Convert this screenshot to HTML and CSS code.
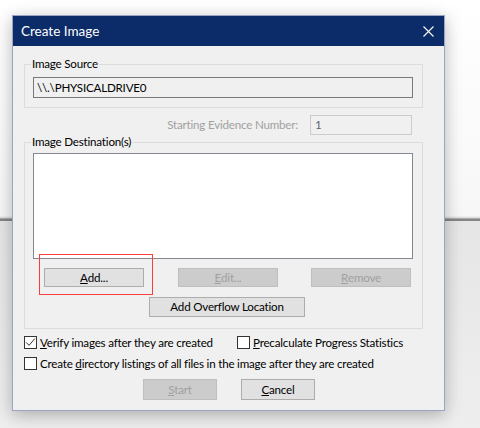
FILE: index.html
```html
<!DOCTYPE html>
<html>
<head>
<meta charset="utf-8">
<title>Create Image</title>
<link rel="stylesheet" href="styles.css">
</head>
<body>
<div class="dialog">
  <div class="titlebar">
    <span class="title">Create Image</span>
    <svg class="close" width="11" height="11" viewBox="0 0 11 11"><path d="M0.5 0.5 L10.5 10.5 M10.5 0.5 L0.5 10.5" stroke="#ffffff" stroke-width="1.1" fill="none"/></svg>
  </div>
  <div class="content">
    <div class="group g-source">
      <span class="legend">Image Source</span>
      <div class="field src">\\.\PHYSICALDRIVE0</div>
    </div>
    <div class="evrow">
      <span class="evlabel">Starting Evidence Number:</span>
      <div class="field ev">1</div>
    </div>
    <div class="group g-dest">
      <span class="legend">Image Destination(s)</span>
      <div class="listbox"></div>
      <div class="btnrow">
        <div class="btn b-add"><u>A</u>dd...</div>
        <div class="btn disabled b-edit"><u>E</u>dit...</div>
        <div class="btn disabled b-remove"><u>R</u>emove</div>
      </div>
      <div class="btn b-overflow">Add Overflow Location</div>
    </div>
    <div class="checks">
      <div class="chk c-verify">
        <span class="box"><svg width="11" height="11" viewBox="0 0 11 11"><path d="M1.2 5.4 L4 8.4 L9.8 1.6" stroke="#333333" stroke-width="1" fill="none"/></svg></span>
        <span class="ctext"><u>V</u>erify images after they are created</span>
      </div>
      <div class="chk">
        <span class="box"></span>
        <span class="ctext"><u>P</u>recalculate Progress Statistics</span>
      </div>
    </div>
    <div class="checks row2">
      <div class="chk">
        <span class="box"></span>
        <span class="ctext">Create <u>d</u>irectory listings of all files in the image after they are created</span>
      </div>
    </div>
    <div class="actions">
      <div class="btn disabled b-act"><u>S</u>tart</div>
      <div class="btn b-act"><u>C</u>ancel</div>
    </div>
  </div>
</div>
<div class="highlight"></div>
</body>
</html>
```
FILE: styles.css
```css
* { box-sizing: border-box; }
html, body { margin: 0; padding: 0; }
body {
  width: 480px;
  height: 428px;
  overflow: hidden;
  position: relative;
  font-family: Lato, "Noto Sans", sans-serif;
  font-size: 11.6px;
  letter-spacing: -0.2px;
  color: #000;
  background: linear-gradient(to bottom, #ffffff 0, #f7f7f7 216px, #d4d4d4 218px, #868686 219px, #868686 221px, #e6e6e6 221px, #eeeeee 100%);
}
.dialog {
  position: absolute;
  left: 12px;
  top: 15px;
  width: 433px;
  height: 396px;
  border: 1px solid #9ba5c3;
  background: #f0f0f0;
  box-shadow: 0 4px 16px rgba(0, 0, 0, 0.28);
  display: flex;
  flex-direction: column;
}
.titlebar {
  flex: none;
  height: 30px;
  background: #0c2c69;
  color: #ffffff;
  display: flex;
  align-items: center;
  justify-content: space-between;
  padding: 0 10px 0 8px;
}
.title { font-size: 13.5px; line-height: 16px; letter-spacing: 0; }
.close { display: block; }
.content {
  padding: 18px 0 0 11px;
  display: flex;
  flex-direction: column;
  align-items: flex-start;
}
.group {
  position: relative;
  width: 399px;
  border: 1px solid #dcdcdc;
}
.legend {
  position: absolute;
  top: -9px;
  left: 6px;
  padding: 0 1px;
  line-height: 16px;
  background: #f0f0f0;
}
.g-source { padding: 12px 8px 9px 8px; }
.field {
  border: 1px solid #7a7a7a;
  background: #f0f0f0;
  display: flex;
  align-items: center;
  line-height: 16px;
}
.src { width: 380px; height: 21px; padding-left: 3px; }
.evrow {
  width: 399px;
  margin-top: 7px;
  display: flex;
  justify-content: flex-end;
  align-items: center;
  gap: 12px;
  padding-right: 11px;
}
.evlabel { color: #a0a0a0; line-height: 16px; }
.ev {
  width: 102px;
  height: 20px;
  border-color: #cccccc;
  padding-left: 4px;
  color: #5a6478;
}
.g-dest { margin-top: 7px; padding: 10px 0 11px 8px; }
.listbox {
  width: 380px;
  height: 106px;
  background: #ffffff;
  border: 1px solid #828790;
}
.btnrow { display: flex; margin-top: 9px; }
.btn {
  display: flex;
  align-items: center;
  justify-content: center;
  background: #e1e1e1;
  border: 1px solid #adadad;
  line-height: 16px;
}
.btn.disabled {
  background: #cccccc;
  border-color: #bfbfbf;
  color: #a0a0a0;
}
.btnrow .btn { width: 100px; height: 19px; }
.b-add { margin-left: 11px; }
.b-edit { margin-left: 34px; }
.b-remove { margin-left: 33px; }
.b-overflow { width: 156px; height: 20px; margin-top: 10px; margin-left: 116px; }
u { text-decoration: underline; text-underline-offset: 1px; text-decoration-thickness: 1px; }
.checks { display: flex; margin-top: 7px; height: 13px; align-items: center; }
.checks.row2 { margin-top: 8px; }
.chk { display: flex; align-items: center; }
.c-verify { width: 213px; }
.box {
  width: 13px;
  height: 13px;
  border: 1px solid #333333;
  background: #ffffff;
  margin-right: 3px;
  display: flex;
  align-items: center;
  justify-content: center;
  flex: none;
}
.box svg { display: block; }
.ctext { line-height: 16px; white-space: nowrap; }
.actions { display: flex; margin-top: 9px; margin-left: 119px; gap: 24px; }
.b-act { width: 74px; height: 21px; }
.highlight {
  position: absolute;
  left: 39px;
  top: 254px;
  width: 114px;
  height: 41px;
  border: 1px solid #ff3b3b;
}
```
